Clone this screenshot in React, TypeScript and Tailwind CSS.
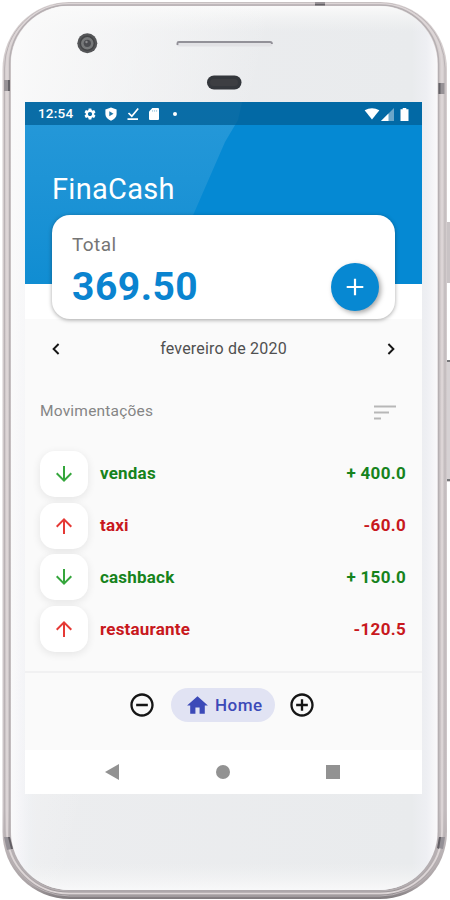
import {
  MdAddCircleOutline,
  MdArrowDownward,
  MdArrowUpward,
  MdHome,
  MdRemoveCircleOutline,
  MdSettings,
} from "react-icons/md";

interface Movement {
  name: string;
  amount: string;
  income: boolean;
}

const movements: Movement[] = [
  { name: "vendas", amount: "+ 400.0", income: true },
  { name: "taxi", amount: "-60.0", income: false },
  { name: "cashback", amount: "+ 150.0", income: true },
  { name: "restaurante", amount: "-120.5", income: false },
];

function StatusBar() {
  return (
    <div className="relative flex h-[23px] items-center bg-[#015f96]/75 pt-px pr-[13px] pl-[13px] text-white">
      <span className="w-[45px] text-[13.5px] leading-none font-medium tracking-[0.2px]">12:54</span>
      <MdSettings className="h-[14px] w-[14px]" />
      <svg className="ml-[7px] h-[14px] w-[14px]" viewBox="0 0 14 14">
        <path d="M7 .5 12.6 2.6V7c0 3.200-2.300 5.500-5.600 6.700C3.700 12.500 1.400 10.200 1.400 7V2.600Z" fill="#fff" />
        <path d="M5.300 4.200v5L9.500 6.700Z" fill="#1d77a8" />
      </svg>
      <svg className="ml-[8px] h-[14px] w-[14px]" viewBox="0 0 14 14" fill="none" stroke="#fff" strokeWidth="1.700">
        <path d="M2.500 6 5.800 9.200 12.200 1.500M1.500 12.200h10.500" />
      </svg>
      <svg className="ml-[8px] h-[14px] w-[12px]" viewBox="0 0 12 14">
        <path d="M4.300 1H10q1 0 1 1v10q0 1-1 1H2q-1 0-1-1V4.500Z" fill="#fff" />
        <path d="M4.600 3v1.800M6.600 3v1.800M8.600 3v1.800" stroke="#8dbbd5" strokeWidth=".7" />
      </svg>
      <span className="ml-[13px] h-1 w-1 rounded-full bg-white" />
      <div className="ml-auto flex items-center">
        <svg className="h-[12px] w-[16px]" viewBox="0 0 16 13">
          <path d="M0 2.500Q8-2 16 2.500L8 12.500Z" fill="#fff" />
        </svg>
        <svg className="ml-[1px] h-[13px] w-[13px]" viewBox="0 0 13 13">
          <path d="M13 0v13H0Z" fill="#6ba6c9" />
          <path d="M7.500 5.500V13H0Z" fill="#fff" />
        </svg>
        <svg className="ml-[6px] h-[13px] w-[9px]" viewBox="0 0 9 13">
          <path d="M2.700 0h3.600v1.200H8.500V13H.5V1.200h2.200Z" fill="#fff" />
        </svg>
      </div>
    </div>
  );
}

function BalanceCard() {
  return (
    <div className="relative mx-[27px] -mt-[104px] flex h-[104px] items-end justify-between rounded-[18px] bg-white pr-4 pb-2 pl-5 shadow-[0_1px_4px_rgba(0,0,0,0.35)]">
      <div className="self-start pt-[19px]">
        <div className="text-[19px] leading-[22px] tracking-[0.4px] text-[#757575]">Total</div>
        <div className="mt-[8px] text-[39px] leading-[47px] font-bold tracking-[0.5px] text-[#0a84d0]">369.50</div>
      </div>
      <button className="flex h-12 w-12 items-center justify-center rounded-full bg-[#0788d2] shadow-[2px_2px_5px_rgba(0,0,0,0.35)]">
        <svg className="h-[18px] w-[18px]" viewBox="0 0 18 18" stroke="#fff" strokeWidth="2.200">
          <path d="M9 .7v16.600M.7 9h16.600" />
        </svg>
      </button>
    </div>
  );
}

function MonthPicker() {
  return (
    <div className="flex h-[60px] items-center justify-between pr-[27px] pl-[27px]">
      <svg className="h-[12px] w-[8px]" viewBox="0 0 8 12" fill="none" stroke="#151515" strokeWidth="1.900">
        <path d="M6.600 1 1.600 6l5 5" />
      </svg>
      <span className="text-[16px] leading-none tracking-[0.2px] text-[#505050]">fevereiro de 2020</span>
      <svg className="h-[12px] w-[8px]" viewBox="0 0 8 12" fill="none" stroke="#151515" strokeWidth="1.900">
        <path d="M1.400 1l5 5-5 5" />
      </svg>
    </div>
  );
}

function MovementRow({ name, amount, income }: Movement) {
  const Arrow = income ? MdArrowDownward : MdArrowUpward;
  const textColor = income ? "text-[#16831c]" : "text-[#c8181d]";

  return (
    <li className="flex h-[51.8px] items-center">
      <div className="flex h-[46px] w-12 items-center justify-center rounded-[15px] bg-white shadow-[0_2px_8px_rgba(0,0,0,0.09)]">
        <Arrow className={income ? "h-6 w-6 text-[#35a63c]" : "h-6 w-6 text-[#e53935]"} />
      </div>
      <span className={`ml-3 text-[17px] leading-none font-bold tracking-[0.2px] ${textColor}`}>{name}</span>
      <span className={`ml-auto text-[17px] leading-none font-bold tracking-[0.3px] ${textColor}`}>{amount}</span>
    </li>
  );
}

function BottomBar() {
  return (
    <div className="flex h-[79px] items-start justify-center border-t-2 border-[#f1f1f2] pt-[14px] pr-[3px]">
      <div className="flex h-[36px] items-center">
        <MdRemoveCircleOutline className="h-[28px] w-[28px] text-[#151515]" />
        <div className="mr-[13px] ml-[15px] flex h-[34px] w-[104px] items-center rounded-full bg-[#e1e3f3] pl-[14px] text-[#3c4ab8]">
          <MdHome className="h-[25px] w-[25px]" />
          <span className="ml-[5px] text-[17px] leading-none font-medium tracking-[0.5px]">Home</span>
        </div>
        <MdAddCircleOutline className="h-[28px] w-[28px] text-[#151515]" />
      </div>
    </div>
  );
}

function SystemNav() {
  return (
    <div className="flex h-11 items-center bg-white pl-[80px] text-[#929292]">
      <svg className="h-4 w-[14px]" viewBox="0 0 14 16" fill="currentColor">
        <path d="M14 0v16L0 8Z" />
      </svg>
      <span className="ml-[97px] h-[14px] w-[14px] rounded-full bg-current" />
      <span className="ml-[96px] h-[14px] w-[14px] bg-current" />
    </div>
  );
}

// Phone shell: metal rim, antenna bands, side buttons, camera and speaker
function PhoneShell() {
  return (
    <svg className="absolute inset-0 h-[900px] w-[450px]" viewBox="0 0 450 900">
      <defs>
        <linearGradient id="face" x2="1">
          <stop offset="0" stopColor="#fafafb" />
          <stop offset=".02" stopColor="#f3f3f7" />
          <stop offset=".045" stopColor="#eceef1" />
          <stop offset=".06" stopColor="#ecedef" />
          <stop offset=".94" stopColor="#e9ebed" />
          <stop offset=".975" stopColor="#eeeff3" />
          <stop offset="1" stopColor="#faf9fb" />
        </linearGradient>
        <linearGradient id="edge" x2="0" y2="1">
          <stop offset="0" stopColor="#fafafa" />
          <stop offset=".03" stopColor="#f3f4f4" stopOpacity="0" />
          <stop offset=".97" stopColor="#f3f4f4" stopOpacity="0" />
          <stop offset="1" stopColor="#f8f8f9" />
        </linearGradient>
        <linearGradient id="glow" x2=".5" y2=".25">
          <stop offset="0" stopColor="#fafafa" />
          <stop offset="1" stopColor="#fafafa" stopOpacity="0" />
        </linearGradient>
        <linearGradient id="rim" x2="0" y2="1">
          <stop offset="0" stopColor="#d6cfcf" />
          <stop offset=".9" stopColor="#cbc4c6" />
          <stop offset=".985" stopColor="#aaa3a5" />
          <stop offset="1" stopColor="#807b7e" />
        </linearGradient>
      </defs>
      <rect x="445" y="222" width="6" height="61" fill="#c9c3c5" />
      <rect x="445" y="360" width="6" height="122" fill="#d6d1d3" />
      <path d="M447 361h3M447 480h3" stroke="#77777a" strokeWidth="2" />
      <rect x="2.500" y="2" width="444.500" height="897" rx="67" fill="url(#rim)" />
      <rect x="4.500" y="3" width="440.500" height="893" rx="65" fill="none" stroke="#b9b2b5" strokeWidth="1" />
      <rect x="7" y="4" width="435" height="889.500" rx="62" fill="none" stroke="#ddd6d7" strokeWidth="1.800" />
      <rect x="9.700" y="5" width="429" height="886" rx="59" fill="none" stroke="#b5afb2" strokeWidth="1.400" />
      <rect x="11" y="6" width="426.500" height="884" rx="58" fill="url(#face)" />
      <rect x="11" y="6" width="426.500" height="884" rx="58" fill="url(#edge)" />
      <rect x="11" y="6" width="426.500" height="884" rx="58" fill="url(#glow)" />
      <path d="M4 80h6v11H4ZM438.500 83h6v11h-6ZM315 2h10v3h-10Z" fill="#979296" />
      <path d="M8 80h2v11H8ZM438.500 83h2v11h-2ZM315 4h10v1.500h-10Z" fill="#656267" />
      <path d="m4 837 5 0 3 12-5 1ZM439 837h6l-2 12-5-1Z" fill="#949096" />
      <path d="m8 837 2 0 3 12-2 0ZM439 837h2l-2 12-2-1Z" fill="#625e64" />
      <circle cx="87.300" cy="43.300" r="10" fill="#555658" />
      <circle cx="87.300" cy="43.300" r="7" fill="#77797a" stroke="#444547" strokeWidth="1.500" />
      <circle cx="87.300" cy="43.300" r="3.600" fill="#4b4c50" />
      <circle cx="86.500" cy="42" r="1.200" fill="#898a8c" />
      <rect x="176.500" y="41" width="96" height="5.500" rx="2.500" fill="#e2e2e5" />
      <path d="M177.500 45v-2q0-1 1.500-1h91q2 0 2 2" fill="none" stroke="#929198" strokeWidth="1.800" />
      <rect x="207" y="75.500" width="34.500" height="14" rx="7" fill="#34373c" />
      <rect x="210" y="79" width="28" height="7" rx="3.500" fill="#3d3e42" />
    </svg>
  );
}

export default function App() {
  return (
    <div className="relative h-[900px] w-[450px] overflow-hidden bg-white pt-[102px] pl-[25px] font-[Roboto,sans-serif]">
      <PhoneShell />
      <main className="relative h-[692px] w-[397px] bg-[#fafafa]">
        <header className="relative h-[182px] bg-[#0589d3]">
          <div className="absolute inset-0 bg-linear-to-b from-[#2699d9] to-[#108dd2] [clip-path:polygon(0_0,217px_0,213px_18px,200px_40px,152px_150px,140px_182px,0_182px)]" />
          <StatusBar />
          <h1 className="relative pt-[47px] pl-[27px] text-[29px] leading-[34px] tracking-[0.3px] text-white">
            FinaCash
          </h1>
        </header>
        <div className="h-[35px] bg-white" />
        <BalanceCard />
        <MonthPicker />
        <div className="flex h-[65px] items-center justify-between pt-px pr-[26px] pl-[15px]">
          <h2 className="text-[15.5px] leading-none tracking-[0.2px] text-[#858585]">Movimentações</h2>
          <svg className="h-[15px] w-[22px]" viewBox="0 0 22 15" stroke="#b7b7b7" strokeWidth="2">
            <path d="M0 1.500h22M0 7.500h15M0 13.500h7" />
          </svg>
        </div>
        <ul className="h-[227px] pt-[4px] pr-4 pl-[15px]">
          {movements.map((m) => (
            <MovementRow key={m.name} {...m} />
          ))}
        </ul>
        <BottomBar />
        <SystemNav />
      </main>
    </div>
  );
}
